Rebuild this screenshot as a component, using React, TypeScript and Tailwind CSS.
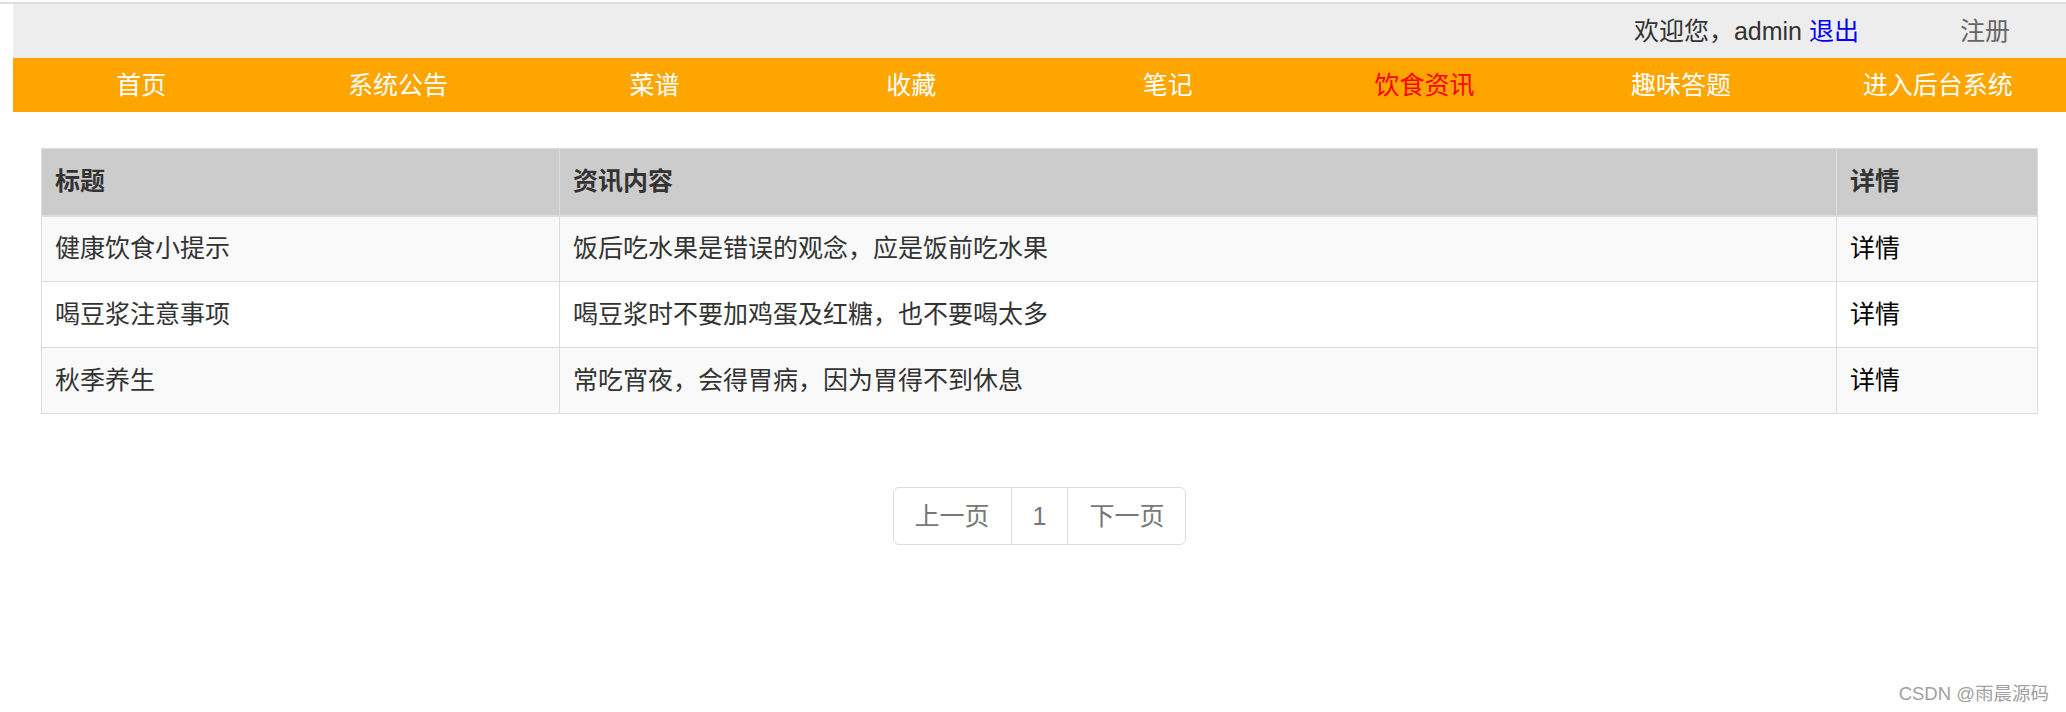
const navItems = ["首页", "系统公告", "菜谱", "收藏", "笔记", "饮食资讯", "趣味答题", "进入后台系统"];

const rows = [
  { title: "健康饮食小提示", content: "饭后吃水果是错误的观念，应是饭前吃水果" },
  { title: "喝豆浆注意事项", content: "喝豆浆时不要加鸡蛋及红糖，也不要喝太多" },
  { title: "秋季养生", content: "常吃宵夜，会得胃病，因为胃得不到休息" },
];

export default function App() {
  return (
    <div className="relative min-h-screen bg-white pt-[2px] font-['Liberation_Sans','Noto_Sans_CJK_SC',sans-serif] text-[25px] text-[#333]">
      <div className="h-[2px] bg-[#dddddd]" />

      <div className="ml-[13px]">
        {/* top bar */}
        <div className="flex h-[54px] items-center justify-end gap-[101px] bg-[#ededed] pr-[56px] leading-none">
          <div>
            欢迎您，admin <a className="text-[#0000ff]">退出</a>
          </div>
          <a className="text-[#666]">注册</a>
        </div>

        {/* nav */}
        <nav className="grid h-[54px] grid-cols-8 bg-[#ffa500]">
          {navItems.map((item) => (
            <a
              key={item}
              className={
                "flex items-center justify-center leading-none " +
                (item === "饮食资讯" ? "text-[#ff0000]" : "text-white")
              }
            >
              {item}
            </a>
          ))}
        </nav>

        {/* table */}
        <div className="px-[28px] pt-[36px]">
          <table className="w-full border-collapse border border-[#dddddd]">
            <thead>
              <tr className="bg-[#cccccc]">
                <th className="h-[67px] w-[518px] border border-b-2 border-[#dddddd] px-[13px] text-left align-middle font-bold leading-none">
                  标题
                </th>
                <th className="h-[67px] border border-b-2 border-[#dddddd] px-[13px] text-left align-middle font-bold leading-none">
                  资讯内容
                </th>
                <th className="h-[67px] w-[201px] border border-b-2 border-[#dddddd] px-[13px] text-left align-middle font-bold leading-none">
                  详情
                </th>
              </tr>
            </thead>
            <tbody>
              {rows.map((row, i) => (
                <tr key={row.title} className={i % 2 === 0 ? "bg-[#f9f9f9]" : "bg-white"}>
                  <td className="h-[66px] border border-[#dddddd] px-[13px] align-middle leading-none">{row.title}</td>
                  <td className="h-[66px] border border-[#dddddd] px-[13px] align-middle leading-none">{row.content}</td>
                  <td className="h-[66px] border border-[#dddddd] px-[13px] align-middle leading-none text-black">
                    <a>详情</a>
                  </td>
                </tr>
              ))}
            </tbody>
          </table>
        </div>

        {/* pagination */}
        <div className="mt-[73px] flex justify-center">
          <div className="flex h-[58px] overflow-hidden rounded-[6px] border border-[#dddddd] leading-none text-[#777]">
            <a className="flex items-center px-[21px]">上一页</a>
            <a className="flex items-center border-l border-[#dddddd] px-[21px]">1</a>
            <a className="flex items-center border-l border-[#dddddd] px-[21px]">下一页</a>
          </div>
        </div>
      </div>

      <div className="absolute bottom-[9px] right-[17px] text-[18.5px] leading-none text-[#a0a0a0]">
        CSDN @雨晨源码
      </div>
    </div>
  );
}
